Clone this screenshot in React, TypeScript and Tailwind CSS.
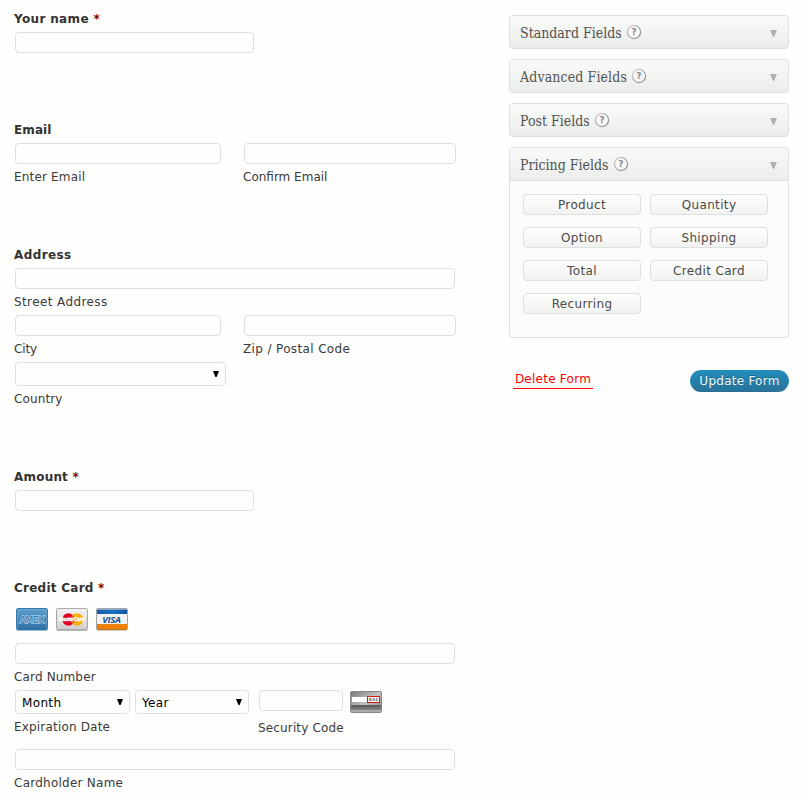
import type { ReactNode } from "react";

const inputBase = "block h-[21px] rounded-[4px] border border-[#dfdfdf] bg-[#fefefd] outline-none";

function Label({ children, required, track = "tracking-[0.35px]" }: { children: ReactNode; required?: boolean; track?: string }) {
  return (
    <div className={`mb-[5px] h-[17px] text-[12px] leading-[19px] font-bold text-[#333] ${track}`}>
      {children}
      {required && <span className="text-[#790000]"> *</span>}
    </div>
  );
}

function Sub({ children, track }: { children: ReactNode; track: string }) {
  return (
    <div className={`mt-1 h-[17px] text-[12px] leading-[19px] whitespace-nowrap text-[#3a3a3a] ${track}`}>{children}</div>
  );
}

function Box({ width }: { width: string }) {
  return <input className={`${inputBase} ml-px ${width}`} />;
}

function SelectBox({ text, width }: { text?: string; width: string }) {
  return (
    <div
      className={`ml-px flex h-6 items-center justify-between rounded-[4px] border border-[#dfdfdf] bg-[#fefefd] pr-1.5 pl-1.5 text-[12px] tracking-[0.35px] text-black ${width}`}
    >
      <span className="pt-0.5">{text}</span>
      <svg width="6" height="6" viewBox="0 0 6 6">
        <path d="M0 0H6L3.6 6H2.4Z" fill="#000" />
      </svg>
    </div>
  );
}

function Help() {
  return (
    <svg width="15" height="15" viewBox="0 0 15 15" className="ml-[5px]">
      <defs>
        <linearGradient id="rim" x1="0" y1="0" x2="1" y2="1">
          <stop offset="0" stopColor="#d5d5d5" />
          <stop offset="1" stopColor="#858585" />
        </linearGradient>
      </defs>
      <circle cx="7" cy="7" r="6.6" fill="#f5f6f5" stroke="url(#rim)" strokeWidth="1.2" />
      <text x="7" y="10.2" textAnchor="middle" fontSize="8.5" fontWeight="bold" fill="#858585" fontFamily="DejaVu Sans">
        ?
      </text>
    </svg>
  );
}

function Head({ title, open, track = "tracking-[0px]" }: { title: string; open?: boolean; track?: string }) {
  return (
    <div
      className={`flex h-[34px] items-center border border-[#dfdfdf] bg-linear-to-b from-[#f9fbf9] to-[#ebedea] pr-[10px] pl-[10px] ${open ? "rounded-t-[4px]" : "mb-[10px] rounded-[4px]"}`}
    >
      <span
        className={`pt-0.5 font-['DejaVu_Serif_Condensed','DejaVu_Serif',serif] text-[14px] leading-5 text-[#525252] [font-stretch:condensed] ${track}`}
      >
        {title}
      </span>
      <Help />
      <svg width="7" height="7" viewBox="0 0 7 7" className="mt-0.5 mr-px ml-auto">
        <path d="M0 0H7L4 7H3Z" fill="#aeb0ae" />
      </svg>
    </div>
  );
}

function Amex() {
  return (
    <svg width="32" height="23" viewBox="0 0 32 23">
      <defs>
        <linearGradient id="amex" x1="0" y1="0" x2="0" y2="1">
          <stop offset="0" stopColor="#5a9fcd" />
          <stop offset="1" stopColor="#2c6fa6" />
        </linearGradient>
      </defs>
      <rect x=".5" y=".5" width="31" height="21.5" rx="1.5" fill="url(#amex)" stroke="#3577a8" />
      <path d="M1.5 21V1.5H30.5V21" fill="none" stroke="#80b7db" strokeOpacity=".5" />
      <text
        x="16"
        y="14.6"
        textAnchor="middle"
        fontSize="9"
        letterSpacing="-.3"
        fontFamily="DejaVu Sans"
        fill="#2f73a8"
        stroke="#a3cae4"
        strokeWidth="1.5"
        paintOrder="stroke"
      >
        AMEX
      </text>
    </svg>
  );
}

function MasterCard() {
  return (
    <svg width="32" height="23" viewBox="0 0 32 23">
      <defs>
        <linearGradient id="mc" x1="0" y1="0" x2="0" y2="1">
          <stop offset="0" stopColor="#f3f3f3" />
          <stop offset="1" stopColor="#cfcfcf" />
        </linearGradient>
      </defs>
      <rect x=".5" y=".5" width="31" height="21.5" rx="1.5" fill="url(#mc)" stroke="#aaa" />
      <path d="M1 22H31" stroke="#979797" />
      <circle cx="12.5" cy="11.5" r="6.2" fill="#e30424" />
      <circle cx="21" cy="11.5" r="6.2" fill="#fcb009" />
      <path d="M16.7 7a6.2 6.2 0 0 1 0 9a6.2 6.2 0 0 1 0-9" fill="#e8601a" />
      <text
        x="15.5"
        y="13.4"
        textAnchor="middle"
        fontSize="5"
        letterSpacing="-.2"
        fontStyle="italic"
        fontWeight="bold"
        fontFamily="Liberation Sans"
        fill="#fff"
        stroke="#fff"
        strokeWidth=".3"
      >
        MasterCard
      </text>
    </svg>
  );
}

function Visa() {
  return (
    <svg width="32" height="23" viewBox="0 0 32 23">
      <defs>
        <linearGradient id="visaTop" x1="0" y1="0" x2="1" y2="0">
          <stop offset="0" stopColor="#1c5cab" />
          <stop offset=".6" stopColor="#1970c5" />
          <stop offset="1" stopColor="#154f9d" />
        </linearGradient>
      </defs>
      <rect x=".5" y=".5" width="31" height="21.5" rx="1.5" fill="#f1f1f1" stroke="#a5a5a5" />
      <rect x="1" y="1.5" width="30" height="4.5" fill="url(#visaTop)" />
      <rect x="1" y="16" width="30" height="5" fill="#ee8208" />
      <path d="M1 21.5H31" stroke="#bd731f" />
      <text
        x="15.5"
        y="14.6"
        textAnchor="middle"
        fontSize="9.5"
        letterSpacing="-.3"
        fontStyle="italic"
        fontWeight="bold"
        fontFamily="Open Sans"
        fill="#1c4f91"
      >
        VISA
      </text>
    </svg>
  );
}

function SecurityCard() {
  return (
    <svg width="32" height="22" viewBox="0 0 32 22" className="mt-px ml-[7px]">
      <defs>
        <linearGradient id="cvv" x1="0" y1="0" x2="1" y2="1">
          <stop offset="0" stopColor="#777" />
          <stop offset=".5" stopColor="#c2c2c2" />
          <stop offset="1" stopColor="#808080" />
        </linearGradient>
        <linearGradient id="stripe" x1="0" y1="0" x2="0" y2="1">
          <stop offset="0" stopColor="#555" />
          <stop offset="1" stopColor="#858785" />
        </linearGradient>
      </defs>
      <rect x=".5" y=".5" width="31" height="21" rx="1.5" fill="url(#cvv)" stroke="#888" />
      <rect x="1" y="14" width="30" height="5" fill="url(#stripe)" />
      <rect x="1" y="19" width="30" height="2" fill="#aaa" />
      <rect x="2" y="6" width="16" height="5" fill="#fff" />
      <rect x="17.5" y="5.5" width="12" height="6" fill="#fff" stroke="#d51c0c" />
      <text
        x="23.5"
        y="10.1"
        textAnchor="middle"
        fontSize="4.5"
        fontWeight="bold"
        fontFamily="DejaVu Sans"
        fill="#666"
      >
        031
      </text>
    </svg>
  );
}

const pricing = ["Product", "Quantity", "Option", "Shipping", "Total", "Credit Card", "Recurring"];

export default function App() {
  return (
    <div className="flex h-[801px] w-[805px] overflow-hidden bg-[#fefefd] pt-[10px] pl-[14px] font-['DejaVu_Sans',sans-serif]">
      <main className="w-[495px] shrink-0">
        <section className="h-[111px]">
          <Label required>Your name</Label>
          <Box width="w-[239px]" />
        </section>
        <section className="h-[125px]">
          <Label track="tracking-[0.1px]">Email</Label>
          <div className="flex">
            <div className="w-[229px]">
              <Box width="w-[206px]" />
              <Sub track="tracking-[0.17px]">Enter Email</Sub>
            </div>
            <div>
              <Box width="w-[212px]" />
              <Sub track="tracking-[0px]">Confirm Email</Sub>
            </div>
          </div>
        </section>
        <section className="h-[222px]">
          <Label track="tracking-[0.4px]">Address</Label>
          <Box width="w-[440px]" />
          <Sub track="tracking-[0.4px]">Street Address</Sub>
          <div className="mt-[5px] flex">
            <div className="w-[229px]">
              <Box width="w-[206px]" />
              <Sub track="tracking-[-0.1px]">City</Sub>
            </div>
            <div>
              <Box width="w-[212px]" />
              <Sub track="tracking-[0.36px]">Zip / Postal Code</Sub>
            </div>
          </div>
          <div className="mt-[5px]">
            <SelectBox width="w-[211px]" />
            <Sub track="tracking-[0.12px]">Country</Sub>
          </div>
        </section>
        <section className="h-[111px]">
          <Label required track="tracking-[0.2px]">
            Amount
          </Label>
          <Box width="w-[239px]" />
        </section>
        <section>
          <Label required track="tracking-[0.25px]">
            Credit Card
          </Label>
          <div className="mt-3 mb-3 ml-0.5 flex gap-2">
            <Amex />
            <MasterCard />
            <Visa />
          </div>
          <Box width="w-[440px]" />
          <Sub track="tracking-[0.15px]">Card Number</Sub>
          <div className="mt-[5px] flex h-[59px]">
            <div className="w-[244px]">
              <div className="flex gap-1">
                <SelectBox text="Month" width="w-[115px]" />
                <SelectBox text="Year" width="w-[114px]" />
              </div>
              <Sub track="tracking-[0.18px]">Expiration Date</Sub>
            </div>
            <div>
              <div className="mb-[5px] flex h-6">
                <Box width="w-[84px]" />
                <SecurityCard />
              </div>
              <Sub track="tracking-[0.15px]">Security Code</Sub>
            </div>
          </div>
          <Box width="w-[440px]" />
          <Sub track="tracking-[0.25px]">Cardholder Name</Sub>
        </section>
      </main>

      <aside className="w-[280px] shrink-0 pt-[5px]">
        <Head title="Standard Fields" />
        <Head title="Advanced Fields" track="tracking-[0.12px]" />
        <Head title="Post Fields" />
        <Head title="Pricing Fields" open />
        <div className="grid h-[157px] grid-cols-[118px_118px] content-start gap-x-[9px] gap-y-3 rounded-b-[4px] border border-t-0 border-[#dfdfdf] bg-[#fbfdfa] pt-[13px] pl-[13px]">
          {pricing.map((name) => (
            <button
              key={name}
              className="h-[21px] rounded-[4px] border border-[#dfdfdf] bg-linear-to-b from-[#fefefd] to-[#f1f3f1] pt-px text-[12px] leading-[18px] tracking-[0.35px] text-[#4a4a4a]"
            >
              {name}
            </button>
          ))}
        </div>
        <div className="mt-8 flex items-start justify-between pl-1">
          <a className="h-[19px] w-20 border-b border-[#f00] text-center text-[12px] leading-[18px] tracking-[0.25px] text-[#f00]">
            Delete Form
          </a>
          <button className="h-[22px] w-[99px] rounded-full border border-[#298cba] border-b-[#2a6f96] bg-linear-to-b from-[#218dba] to-[#28739b] text-[12px] leading-5 tracking-[0.25px] whitespace-nowrap text-[#f2f8fb] [text-shadow:0_-1px_0_rgba(0,0,0,0.3)]">
            Update Form
          </button>
        </div>
      </aside>
    </div>
  );
}
